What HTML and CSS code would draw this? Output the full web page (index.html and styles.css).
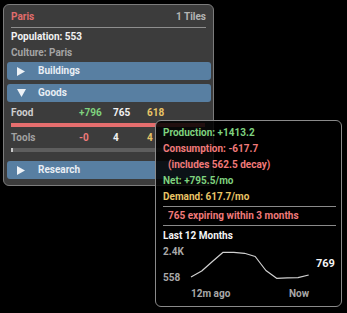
FILE: index.html
```html
<!DOCTYPE html>
<html lang="en">
<head>
    <meta charset="UTF-8">
    <title>Paris</title>
    <link rel="stylesheet" href="styles.css">
</head>
<body>
    <div class="panel">
        <div class="row header">
            <span class="city">Paris</span>
            <span class="tiles">1 Tiles</span>
        </div>
        <div class="divider"></div>
        <div class="row population">Population: 553</div>
        <div class="row culture">Culture: Paris</div>

        <div class="section-btn first">
            <svg class="arrow" width="9" height="9" viewBox="0 0 9 9"><polygon points="0,0 8,4.5 0,9" fill="#eef2f6"/></svg>
            <span>Buildings</span>
        </div>
        <div class="section-btn">
            <svg class="arrow" width="9" height="9" viewBox="0 0 9 9"><polygon points="0,0 9,0 4.5,8" fill="#eef2f6"/></svg>
            <span>Goods</span>
        </div>

        <div class="row good food">
            <span class="good-name">Food</span>
            <span class="col pos">+796</span>
            <span class="col stock">765</span>
            <span class="col demand">618</span>
        </div>
        <div class="bar"><div class="bar-fill red" style="width: 100%"></div></div>

        <div class="row good tools">
            <span class="good-name dim">Tools</span>
            <span class="col neg">-0</span>
            <span class="col stock">4</span>
            <span class="col demand">4</span>
        </div>
        <div class="bar"><div class="bar-fill light" style="width: 1%"></div></div>

        <div class="section-btn research">
            <svg class="arrow" width="9" height="9" viewBox="0 0 9 9"><polygon points="0,0 8,4.5 0,9" fill="#eef2f6"/></svg>
            <span>Research</span>
        </div>
    </div>

    <div class="tooltip">
        <div class="tip-line pos">Production: +1413.2</div>
        <div class="tip-line neg">Consumption: -617.7</div>
        <div class="tip-line neg indent">(includes 562.5 decay)</div>
        <div class="tip-line pos">Net: +795.5/mo</div>
        <div class="tip-line demand">Demand: 617.7/mo</div>
        <div class="tip-divider"></div>
        <div class="tip-line neg indent">765 expiring within 3 months</div>
        <div class="tip-divider second"></div>
        <div class="tip-line title">Last 12 Months</div>

        <div class="chart">
            <div class="y-axis">
                <span>2.4K</span>
                <span>558</span>
            </div>
            <svg class="spark" width="120" height="42" viewBox="0 0 120 42">
                <polyline fill="none" stroke="#d0d0d0" stroke-width="1.2" stroke-linejoin="round"
                    points="1,33 11.7,27 22.4,17.5 33.1,8.3 43.8,8.3 54.5,9.3 65.2,12.5 75.9,26.5 86.6,34.3 97.3,33.8 108,33.7 118.7,31"/>
            </svg>
            <div class="current">769</div>
        </div>
        <div class="x-axis">
            <span>12m ago</span>
            <span>Now</span>
        </div>
    </div>
</body>
</html>
```

FILE: styles.css
```css
body {
    margin: 0;
    background-color: #000;
    font-family: 'Roboto', 'Liberation Sans', sans-serif;
    font-size: 10px;
    font-weight: bold;
    line-height: 16px;
    color: #eee;
}

.panel {
    width: 211px;
    box-sizing: border-box;
    margin: 4px 0 0 3px;
    padding: 4px 2px 6px 3px;
    background-color: #3c3c3c;
    border: 1px solid #7c7c7c;
    border-radius: 6px;
}

.row {
    padding: 0 4px;
}

.header {
    display: flex;
    justify-content: space-between;
    padding-right: 5px;
}

.city {
    color: #e06c6c;
}

.tiles {
    color: #b4b4b4;
}

.divider {
    height: 1px;
    margin: 2px 5px 1px 4px;
    background-color: #8e8e8e;
}

.population {
    color: #f2f2f2;
}

.culture {
    color: #a4a4a4;
}

.section-btn {
    display: flex;
    align-items: center;
    gap: 12px;
    height: 18px;
    margin-top: 4px;
    padding-left: 10px;
    background-color: #587fa2;
    border-radius: 3px;
    color: #e8eef4;
}

.section-btn.first {
    margin-top: 1px;
}

.section-btn.research {
    margin-top: 9px;
}

.arrow {
    display: block;
}

.good {
    display: flex;
    margin-top: 3px;
}

.good.tools {
    margin-top: 3px;
}

.good-name {
    width: 68px;
    color: #cfcfcf;
}

.good-name.dim {
    color: #a2a2a2;
}

.col {
    width: 34px;
}

.col.demand {
    width: auto;
}

.pos {
    color: #7fd27f;
}

.neg {
    color: #f07a7a;
}

.stock {
    color: #f2f2f2;
}

.demand {
    color: #e9c466;
}

.bar {
    height: 4px;
    margin: 2px 6px 0 4px;
    background-color: #5e5e5e;
}

.tools + .bar {
    margin-top: 2px;
}

.bar-fill {
    height: 100%;
}

.bar-fill.red {
    background-color: #e66e6e;
}

.bar-fill.light {
    background-color: #c8c8c8;
}

/* tooltip sits over the panel */
.tooltip {
    position: absolute;
    left: 155px;
    top: 120px;
    width: 187px;
    box-sizing: border-box;
    padding: 4px 5px 4px 7px;
    background-color: rgba(0, 0, 0, 0.86);
    border: 1px solid #8a8a8a;
    border-radius: 6px;
}

.tip-line.indent {
    padding-left: 5px;
}

.tip-line.title {
    color: #f4f4f4;
}

.tip-divider {
    height: 1px;
    margin: 1px 0;
    background-color: #8a8a8a;
}

.tip-divider.second {
    margin-bottom: 2px;
}

.chart {
    display: flex;
}

.y-axis {
    display: flex;
    flex-direction: column;
    justify-content: space-between;
    width: 27px;
    height: 42px;
    color: #a8a8a8;
}

.spark {
    display: block;
}

.current {
    padding: 12px 0 0 6px;
    color: #f4f4f4;
    font-size: 11px;
}

.x-axis {
    display: flex;
    justify-content: space-between;
    width: 118px;
    margin-left: 28px;
    color: #a8a8a8;
}
```
